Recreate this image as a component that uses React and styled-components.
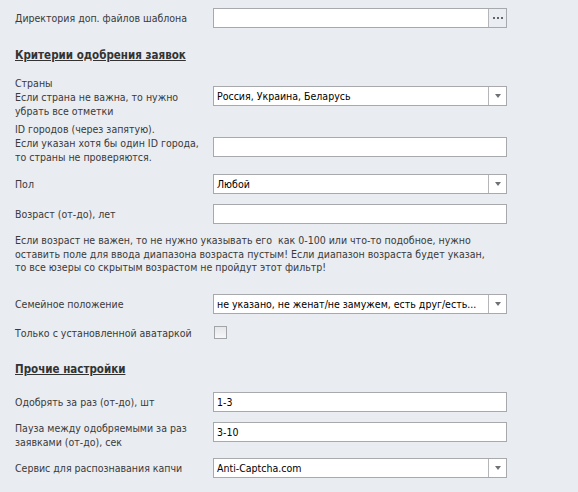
import React from "react";
import styled, { createGlobalStyle } from "styled-components";

const GlobalStyle = createGlobalStyle`
  html, body {
    margin: 0;
    padding: 0;
    background: #e9ecf1;
  }
  body {
    font-family: "DejaVu Sans Condensed", "DejaVu Sans", sans-serif;
    font-stretch: condensed;
    font-size: 10.5px;
    color: #3a3a3a;
  }
`;

const Page = styled.div`
  width: 578px;
  height: 492px;
  overflow: hidden;
  padding: 8px 0 0 15px;
  box-sizing: border-box;
`;

const Row = styled.div`
  display: grid;
  grid-template-columns: 198px 294px;
  align-items: start;
  margin-top: ${({ gap }) => gap || 0}px;
`;

const Label = styled.div`
  line-height: 14px;
  padding-top: ${({ offset }) => offset || 0}px;
`;

const Heading = styled.div`
  font-weight: bold;
  font-size: 11.5px;
  text-decoration: underline;
  color: #333;
  line-height: 16px;
  margin-top: ${({ gap }) => gap || 0}px;
`;

const Note = styled.div`
  line-height: 13.5px;
  margin-top: ${({ gap }) => gap || 0}px;
  white-space: pre-line;
`;

const FieldBox = styled.div`
  display: flex;
  height: 20px;
  box-sizing: border-box;
  border: 1px solid #a7a9ac;
  background: #fff;
  margin-top: ${({ offset }) => offset || 0}px;
`;

const Value = styled.div`
  flex: 1;
  padding-left: 3px;
  line-height: 18px;
  color: #000;
  white-space: nowrap;
  overflow: hidden;
`;

const SideButton = styled.div`
  width: 17px;
  border-left: 1px solid #b4b6b9;
  background: ${({ tinted }) => (tinted ? "#eaedf1" : "#fff")};
  display: flex;
  align-items: center;
  justify-content: center;
`;

const Dots = styled.span`
  display: flex;
  gap: 2px;
  span {
    width: 2px;
    height: 2px;
    background: #60656b;
  }
`;

const Arrow = styled.span`
  width: 0;
  height: 0;
  border-left: 3.5px solid transparent;
  border-right: 3.5px solid transparent;
  border-top: 4px solid #6f7275;
`;

const CheckRow = styled(Row)`
  align-items: center;
`;

const CheckBox = styled.div`
  width: 13px;
  height: 13px;
  box-sizing: border-box;
  margin-left: 1px;
  border: 1px solid #a2a4a7;
  background: linear-gradient(#e4e6e9, #f6f7f8);
`;

function Input({ value, offset }) {
  return (
    <FieldBox offset={offset}>
      <Value>{value}</Value>
    </FieldBox>
  );
}

function Select({ value, offset }) {
  return (
    <FieldBox offset={offset}>
      <Value>{value}</Value>
      <SideButton>
        <Arrow />
      </SideButton>
    </FieldBox>
  );
}

function Browse({ offset }) {
  return (
    <FieldBox offset={offset}>
      <Value />
      <SideButton tinted>
        <Dots>
          <span />
          <span />
          <span />
        </Dots>
      </SideButton>
    </FieldBox>
  );
}

export default function App() {
  return (
    <Page>
      <GlobalStyle />
      <Row>
        <Label offset={3}>Директория доп. файлов шаблона</Label>
        <Browse />
      </Row>

      <Heading gap={19}>Критерии одобрения заявок</Heading>

      <Row gap={13}>
        <Label>
          Страны
          <br />
          Если страна не важна, то нужно
          <br />
          убрать все отметки
        </Label>
        <Select value="Россия, Украина, Беларусь" offset={10} />
      </Row>

      <Row gap={4}>
        <Label>
          ID городов (через запятую).
          <br />
          Если указан хотя бы один ID города,
          <br />
          то страны не проверяются.
        </Label>
        <Input offset={15} />
      </Row>

      <Row gap={10}>
        <Label offset={3}>Пол</Label>
        <Select value="Любой" />
      </Row>

      <Row gap={10}>
        <Label offset={3}>Возраст (от-до), лет</Label>
        <Input />
      </Row>

      <Note gap={10}>
        {
          "Если возраст не важен, то не нужно указывать его \u00a0как 0-100 или что-то подобное, нужно\nоставить поле для ввода диапазона возраста пустым! Если диапазон возраста будет указан,\nто все юзеры со скрытым возрастом не пройдут этот фильтр!"
        }
      </Note>

      <Row gap={19}>
        <Label offset={3}>Семейное положение</Label>
        <Select value="не указано, не женат/не замужем, есть друг/есть..." />
      </Row>

      <CheckRow gap={12}>
        <Label>Только с установленной аватаркой</Label>
        <CheckBox />
      </CheckRow>

      <Heading gap={21}>Прочие настройки</Heading>

      <Row gap={15}>
        <Label offset={3}>Одобрять за раз (от-до), шт</Label>
        <Input value="1-3" />
      </Row>

      <Row gap={9}>
        <Label>
          Пауза между одобряемыми за раз
          <br />
          заявками (от-до), сек
        </Label>
        <Input value="3-10" offset={1} />
      </Row>

      <Row gap={9}>
        <Label offset={3}>Сервис для распознавания капчи</Label>
        <Select value="Anti-Captcha.com" />
      </Row>
    </Page>
  );
}
